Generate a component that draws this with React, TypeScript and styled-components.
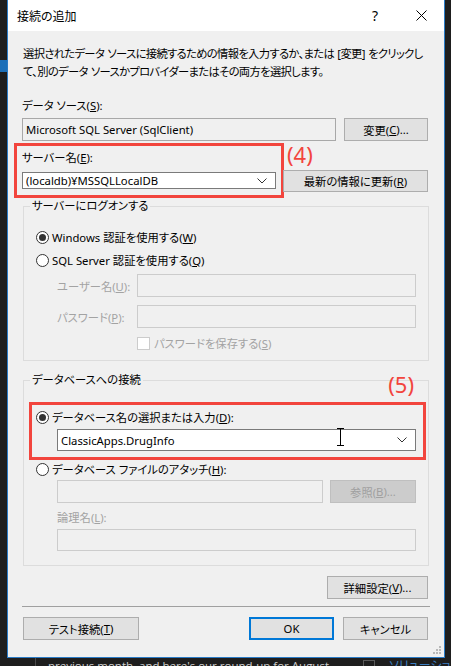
import React from 'react';
import styled, { createGlobalStyle, css } from 'styled-components';

/**
 * * Global
 */
const GlobalStyle = createGlobalStyle`
  html, body {
    margin: 0;
    padding: 0;
    background: #1e1e1e;
    overflow: hidden;
  }
  body {
    font-family: "Noto Sans", "Noto Sans CJK JP", sans-serif;
    font-size: 11.3px;
    font-feature-settings: "palt";
    color: #000;
  }
`;

const RED = '#f2453d';

/**
 * * Layout
 */
const Page = styled.div`
  width: 451px;
  height: 666px;
  display: flex;
  flex-direction: column;
  overflow: hidden;
`;

const Stage = styled.div`
  display: flex;
  flex-direction: row;
`;

const SideStrip = styled.div<{ $w: number }>`
  width: ${(p) => p.$w}px;
  display: flex;
  flex-direction: column;
`;

const SideMark = styled.div`
  margin-top: 60px;
  height: 12px;
  background: #1c6fb8;
`;

const Dialog = styled.div`
  position: relative;
  box-sizing: border-box;
  width: 438px;
  height: 658px;
  border: 1px solid #2a7bc6;
  border-top: none;
  background: #f0f0f0;
  display: flex;
  flex-direction: column;
`;

const TitleBar = styled.div`
  height: 31px;
  background: #fff;
  display: flex;
  align-items: center;
  padding-left: 9px;
`;

const TitleText = styled.div`
  flex: 1;
  font-size: 12px;
`;

const CaptionButton = styled.div`
  width: 46px;
  height: 31px;
  display: flex;
  align-items: center;
  justify-content: center;
  font-size: 14px;
`;

const Body = styled.div`
  display: flex;
  flex-direction: column;
  padding: 0 16px 0 14px;
`;

const Description = styled.p`
  margin: 14px 0 0 1px;
  line-height: 18px;
  letter-spacing: -0.65px;
  word-spacing: 1px;
  white-space: nowrap;
`;

const FieldLabel = styled.div<{ $disabled?: boolean; $top?: number }>`
  height: 16px;
  line-height: 16px;
  margin-top: ${(p) => p.$top ?? 0}px;
  white-space: nowrap;
  color: ${(p) => (p.$disabled ? '#a3a3a3' : '#000')};
`;

const Row = styled.div<{ $top?: number; $gap?: number }>`
  display: flex;
  align-items: center;
  margin-top: ${(p) => p.$top ?? 0}px;
  gap: ${(p) => p.$gap ?? 0}px;
`;

const TextBox = styled.div<{ $variant?: 'readonly' | 'combo' | 'disabled'; $w?: number; $h?: number }>`
  position: relative;
  box-sizing: border-box;
  height: ${(p) => p.$h ?? 23}px;
  ${(p) => (p.$w ? css`width: ${p.$w}px;` : css`flex: 1;`)}
  display: flex;
  align-items: center;
  padding: 0 8px 0 3px;
  white-space: nowrap;
  ${(p) =>
    p.$variant === 'combo'
      ? css`
          background: #fff;
          border: 1px solid #7a7a7a;
        `
      : p.$variant === 'disabled'
        ? css`
            background: #f0f0f0;
            border: 1px solid #cccccc;
          `
        : css`
            background: #f0f0f0;
            border: 1px solid #a8a8a8;
          `}
`;

const ComboText = styled.span`
  flex: 1;
`;

const Button = styled.div<{ $w: number; $primary?: boolean; $disabled?: boolean; $h?: number }>`
  box-sizing: border-box;
  width: ${(p) => p.$w}px;
  height: ${(p) => p.$h ?? 23}px;
  flex-shrink: 0;
  display: flex;
  align-items: center;
  justify-content: center;
  white-space: nowrap;
  background: #e1e1e1;
  border: 1px solid #adadad;
  ${(p) =>
    p.$primary &&
    css`
      border: 2px solid #0078d7;
    `}
  ${(p) =>
    p.$disabled &&
    css`
      background: #cccccc;
      border-color: #bfbfbf;
      color: #a0a0a0;
    `}
`;

const Highlight = styled.div<{ $pad: string; $margin: string; $w?: number }>`
  box-sizing: border-box;
  border: 3px solid ${RED};
  padding: ${(p) => p.$pad};
  margin: ${(p) => p.$margin};
  ${(p) => p.$w && css`width: ${p.$w}px;`}
  display: flex;
  flex-direction: column;
`;

const Annotation = styled.div`
  color: ${RED};
  font-family: "Noto Sans", sans-serif;
  font-size: 22px;
  line-height: 26px;
`;

const ServerRow = styled.div`
  display: flex;
  align-items: flex-start;
`;

const ServerSide = styled.div`
  display: flex;
  flex-direction: column;
  margin-left: -1px;
`;

const AnnotationPad = styled.div`
  padding-left: 4px;
  height: 26px;
`;

const GroupBox = styled.fieldset<{ $top?: number; $padBottom: number }>`
  position: relative;
  margin: ${(p) => p.$top ?? 0}px -1px 0 1px;
  padding: 0 0 ${(p) => p.$padBottom}px 0;
  border: 1px solid #dcdcdc;
  min-width: 0;
  display: flex;
  flex-direction: column;
`;

const GroupTitle = styled.legend`
  margin-left: 6px;
  padding: 0 2px;
  line-height: 16px;
`;

const GroupAnnotation = styled(Annotation)`
  position: absolute;
  right: 14px;
  top: -17px;
`;

const RadioRow = styled.div<{ $top?: number; $indent: number }>`
  display: flex;
  align-items: center;
  height: 18px;
  gap: 3px;
  margin-top: ${(p) => p.$top ?? 0}px;
  padding-left: ${(p) => p.$indent}px;
  white-space: nowrap;
`;

const RadioMark = styled.span<{ $checked?: boolean }>`
  box-sizing: border-box;
  width: 13px;
  height: 13px;
  border-radius: 50%;
  border: 1px solid #333;
  background: #fff;
  display: flex;
  align-items: center;
  justify-content: center;
  &::after {
    content: '';
    width: 7px;
    height: 7px;
    border-radius: 50%;
    background: ${(p) => (p.$checked ? '#333' : 'transparent')};
  }
`;

const CheckMark = styled.span`
  box-sizing: border-box;
  width: 13px;
  height: 13px;
  border: 1px solid #cccccc;
  background: #fff;
`;

const Indented = styled.div<{ $left: number; $right: number }>`
  display: flex;
  flex-direction: column;
  padding: 0 ${(p) => p.$right}px 0 ${(p) => p.$left}px;
`;

const LabelCell = styled.div`
  width: 80px;
  color: #a3a3a3;
  white-space: nowrap;
`;

const CheckRow = styled.div`
  display: flex;
  align-items: center;
  gap: 4px;
  height: 18px;
  margin: 6px 0 0 80px;
  color: #a3a3a3;
  white-space: nowrap;
`;

const RightAlign = styled.div<{ $top: number }>`
  display: flex;
  justify-content: flex-end;
  margin-top: ${(p) => p.$top}px;
`;

const Separator = styled.div`
  height: 1px;
  background: #a0a0a0;
  margin: 7px -2px 0 0;
`;

const FooterRow = styled.div`
  display: flex;
  align-items: center;
  margin-top: 10px;
  gap: 9px;
`;

const Spacer = styled.div`
  flex: 1;
`;

const Grip = styled.svg`
  position: absolute;
  right: 2px;
  bottom: 2px;
`;

const Caret = styled.svg`
  position: absolute;
  left: 278px;
  top: -2px;
`;

const BottomBar = styled.div`
  display: flex;
  align-items: flex-start;
  height: 8px;
  overflow: hidden;
`;

const BottomRule = styled.div`
  width: 1px;
  height: 8px;
  margin-left: 35px;
  background: #4a4a4a;
`;

const BottomText = styled.div`
  margin-left: 12px;
  margin-top: 1px;
  font-family: "Open Sans", sans-serif;
  font-size: 11.5px;
  line-height: 14px;
  color: #cfcfcf;
  white-space: nowrap;
  flex: 1;
`;

const BottomBox = styled.div`
  width: 12px;
  height: 8px;
  border: 1px solid #5a5a5a;
  border-bottom: none;
  box-sizing: border-box;
  margin: 2px 14px 0 0;
`;

const BottomLink = styled.div`
  margin-top: 1px;
  font-size: 12px;
  line-height: 14px;
  color: #3c7fc2;
  white-space: nowrap;
  width: 62px;
  overflow: hidden;
`;

/**
 * * Small drawings
 */
const Chevron = () => (
  <svg width="10" height="6" viewBox="0 0 10 6">
    <polyline points="0.5,0.5 5,5 9.5,0.5" fill="none" stroke="#333" strokeWidth="1" />
  </svg>
);

const CloseGlyph = () => (
  <svg width="11" height="11" viewBox="0 0 11 11">
    <line x1="0.5" y1="0.5" x2="10.5" y2="10.5" stroke="#000" strokeWidth="1" />
    <line x1="10.5" y1="0.5" x2="0.5" y2="10.5" stroke="#000" strokeWidth="1" />
  </svg>
);

const Key = ({ k }: { k: string }) => (
  <>
    (<u>{k}</u>)
  </>
);

/**
 * * Dialog
 */
const App = () => {
  return (
    <Page>
      <GlobalStyle />
      <Stage>
        <SideStrip $w={7}>
          <SideMark />
        </SideStrip>
        <Dialog>
          <TitleBar>
            <TitleText>接続の追加</TitleText>
            <CaptionButton>?</CaptionButton>
            <CaptionButton>
              <CloseGlyph />
            </CaptionButton>
          </TitleBar>
          <Body>
            <Description>
              選択されたデータ ソースに接続するための情報を入力するか、または [変更] をクリックし
              <br />
              て、別のデータ ソースかプロバイダーまたはその両方を選択します。
            </Description>

            <FieldLabel $top={17}>
              データ ソース<Key k="S" />:
            </FieldLabel>
            <Row $top={4} $gap={8}>
              <TextBox $variant="readonly">Microsoft SQL Server (SqlClient)</TextBox>
              <Button $w={84}>
                変更<Key k="C" />...
              </Button>
            </Row>

            <ServerRow>
              <Highlight $pad="4px 5px 6px 5px" $margin="2px 0 0 -8px" $w={271}>
                <FieldLabel>
                  サーバー名<Key k="E" />:
                </FieldLabel>
                <TextBox $variant="combo" $h={22} style={{ marginTop: 6 }}>
                  <ComboText>(localdb)¥MSSQLLocalDB</ComboText>
                  <Chevron />
                </TextBox>
              </Highlight>
              <ServerSide>
                <AnnotationPad>
                  <Annotation>(4)</Annotation>
                </AnnotationPad>
                <Button $w={145} $h={22} style={{ marginTop: 3 }}>
                  最新の情報に更新<Key k="R" />
                </Button>
              </ServerSide>
            </ServerRow>

            <GroupBox $padBottom={8}>
              <GroupTitle>サーバーにログオンする</GroupTitle>
              <RadioRow $top={14} $indent={12}>
                <RadioMark $checked />
                <span>
                  Windows 認証を使用する<Key k="W" />
                </span>
              </RadioRow>
              <RadioRow $top={5} $indent={12}>
                <RadioMark />
                <span>
                  SQL Server 認証を使用する<Key k="Q" />
                </span>
              </RadioRow>
              <Indented $left={33} $right={12}>
                <Row $top={5}>
                  <LabelCell>
                    ユーザー名<Key k="U" />:
                  </LabelCell>
                  <TextBox $variant="disabled" />
                </Row>
                <Row $top={8}>
                  <LabelCell>
                    パスワード<Key k="P" />:
                  </LabelCell>
                  <TextBox $variant="disabled" />
                </Row>
                <CheckRow>
                  <CheckMark />
                  <span>
                    パスワードを保存する<Key k="S" />
                  </span>
                </CheckRow>
              </Indented>
            </GroupBox>

            <GroupBox $top={11} $padBottom={14}>
              <GroupTitle>データベースへの接続</GroupTitle>
              <GroupAnnotation>(5)</GroupAnnotation>
              <Highlight $pad="3px 7px 6px 4px" $margin="14px 2px 0 5px">
                <RadioRow $indent={0}>
                  <RadioMark $checked />
                  <span>
                    データベース名の選択または入力<Key k="D" />:
                  </span>
                </RadioRow>
                <Row $top={3} style={{ paddingLeft: 21 }}>
                  <TextBox $variant="combo" $h={22}>
                    <ComboText>ClassicApps.DrugInfo</ComboText>
                    <Caret width="9" height="18" viewBox="0 0 9 18">
                      <path d="M1 0.5h7M4.5 0.5v17M1 17.5h7" fill="none" stroke="#000" strokeWidth="1" />
                    </Caret>
                    <Chevron />
                  </TextBox>
                </Row>
              </Highlight>
              <RadioRow $indent={12}>
                <RadioMark />
                <span>
                  データベース ファイルのアタッチ<Key k="H" />:
                </span>
              </RadioRow>
              <Indented $left={33} $right={12}>
                <Row $top={2} $gap={7}>
                  <TextBox $variant="disabled" />
                  <Button $w={86} $disabled>
                    参照<Key k="B" />...
                  </Button>
                </Row>
                <FieldLabel $disabled $top={7}>
                  論理名<Key k="L" />:
                </FieldLabel>
                <Row $top={3}>
                  <TextBox $variant="disabled" $h={22} />
                </Row>
              </Indented>
            </GroupBox>

            <RightAlign $top={10}>
              <Button $w={101}>
                詳細設定<Key k="V" />...
              </Button>
            </RightAlign>
            <Separator />
            <FooterRow>
              <Button $w={116} style={{ marginLeft: 1 }}>
                テスト接続<Key k="T" />
              </Button>
              <Spacer />
              <Button $w={85} $primary>
                OK
              </Button>
              <Button $w={85}>キャンセル</Button>
            </FooterRow>
          </Body>
          <Grip width="10" height="10" viewBox="0 0 10 10">
            {[
              [8, 2],
              [8, 5],
              [8, 8],
              [5, 5],
              [5, 8],
              [2, 8],
            ].map(([x, y]) => (
              <rect key={`${x}-${y}`} x={x - 1} y={y - 1} width="2" height="2" fill="#b8b8b8" />
            ))}
          </Grip>
        </Dialog>
        <SideStrip $w={6} />
      </Stage>
      <BottomBar>
        <BottomRule />
        <BottomText>previous month, and here's our round-up for August</BottomText>
        <BottomBox />
        <BottomLink>ソリューション</BottomLink>
      </BottomBar>
    </Page>
  );
};

export default App;
